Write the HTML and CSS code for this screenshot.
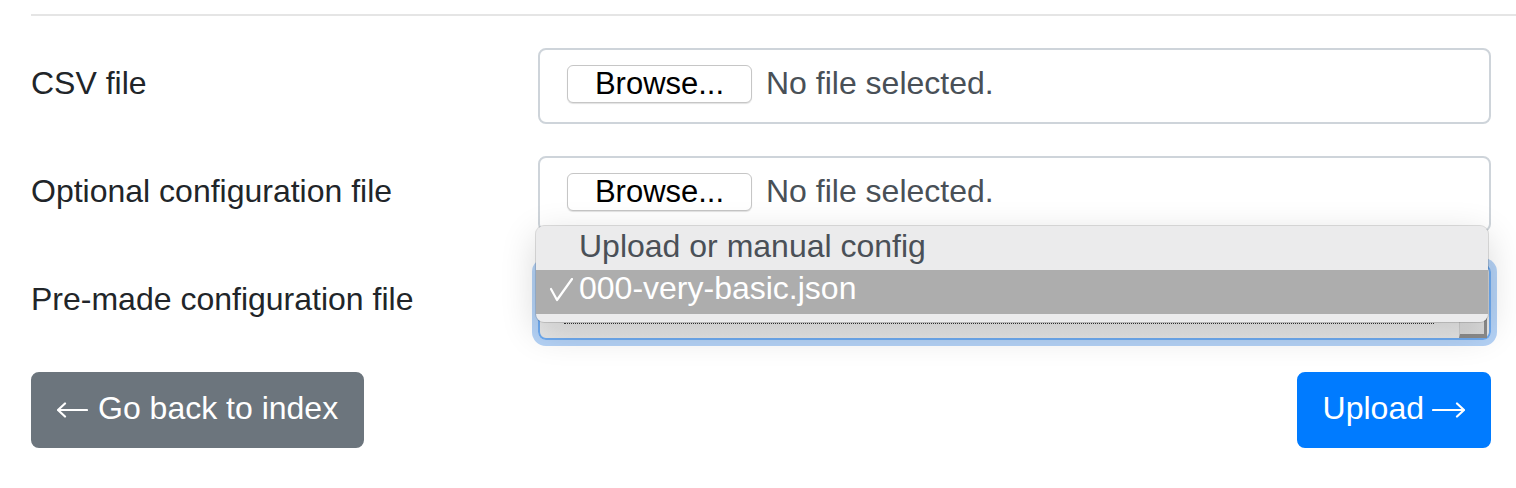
FILE: index.html
```html
<!DOCTYPE html>
<html lang="en">
<head>
<meta charset="utf-8">
<title>Upload</title>
<link rel="stylesheet" href="styles.css">
</head>
<body>
<main class="page">
  <hr class="divider">
  <form class="upload-form">
    <div class="field-row">
      <label class="field-label">CSV file</label>
      <div class="file-box">
        <span class="browse-btn">Browse...</span>
        <span class="file-status">No file selected.</span>
      </div>
    </div>
    <div class="field-row">
      <label class="field-label">Optional configuration file</label>
      <div class="file-box">
        <span class="browse-btn">Browse...</span>
        <span class="file-status">No file selected.</span>
      </div>
    </div>
    <div class="field-row">
      <label class="field-label">Pre-made configuration file</label>
      <div class="select-wrap">
        <div class="select-box">
          <span class="select-focus"></span>
          <span class="select-arrow"></span>
        </div>
        <ul class="popup">
          <li class="popup-item"><span class="check"></span><span class="item-text">Upload or manual config</span></li>
          <li class="popup-item selected"><span class="check"><svg class="check-icon" width="24" height="24" viewBox="0 0 24 24"><polyline points="2,11 8,22 23,1" fill="none" stroke="#fff" stroke-width="2.2" stroke-linecap="round" stroke-linejoin="round"/></svg></span><span class="item-text">000-very-basic.json</span></li>
        </ul>
      </div>
    </div>
    <div class="actions">
      <a class="btn btn-secondary"><svg class="arrow" width="31" height="16" viewBox="0 0 31 16"><path d="M1 8H30M1 8L8 1.5M1 8L8 14.5" fill="none" stroke="#fff" stroke-width="2.2" stroke-linecap="round" stroke-linejoin="round"/></svg>Go back to index</a>
      <button type="button" class="btn btn-primary">Upload<svg class="arrow arrow-right" width="33" height="16" viewBox="0 0 33 16"><path d="M1 8H32M32 8L25 1.5M32 8L25 14.5" fill="none" stroke="#fff" stroke-width="2.2" stroke-linecap="round" stroke-linejoin="round"/></svg></button>
    </div>
  </form>
</main>
</body>
</html>
```
FILE: styles.css
```css
html, body {
  margin: 0;
  padding: 0;
  background: #fff;
}
body {
  font-family: "Liberation Sans", Arial, Helvetica, sans-serif;
  color: #212529;
}
.page {
  width: 1460px;
  padding: 14px 0 0 31px;
}
.divider {
  border: 0;
  height: 2px;
  background: #e5e5e5;
  margin: 0 -25px 32px 0;
}
.field-row {
  display: grid;
  grid-template-columns: 507px 953px;
  margin-bottom: 32px;
}
.field-label {
  font-size: 32px;
  line-height: 48px;
  padding: 11px 0 17px;
}
.file-box {
  box-sizing: border-box;
  height: 76px;
  border: 2px solid #ced4da;
  border-radius: 8px;
  display: flex;
  align-items: center;
  gap: 14px;
  padding: 0 0 4px 27px;
}
.browse-btn {
  box-sizing: border-box;
  width: 185px;
  height: 38px;
  padding-bottom: 1px;
  border: 1px solid #c6c6c6;
  border-radius: 6px;
  background: #fff;
  box-shadow: 0 1px 1px rgba(0, 0, 0, 0.12);
  display: flex;
  align-items: center;
  justify-content: center;
  font-size: 31px;
  color: #000;
}
.file-status {
  font-size: 32px;
  color: #495057;
  padding-bottom: 2px;
}
.select-wrap {
  position: relative;
  height: 76px;
}
.select-box {
  position: relative;
  box-sizing: border-box;
  height: 76px;
  border: 2px solid #6eaaf0;
  border-radius: 8px;
  box-shadow: 0 0 0 6px #b4d2f6;
  background: linear-gradient(#f6f6f6, #e6e6e6);
}
.select-focus {
  position: absolute;
  left: 24px;
  width: 870px;
  top: 57px;
  border-top: 1px dotted #333;
}
.select-arrow {
  position: absolute;
  right: 2px;
  bottom: 0;
  width: 24px;
  height: 40px;
  background: linear-gradient(#ececec, #dadada);
  border-left: 1px solid #cfcfcf;
  border-right: 3px solid #8c8c8c;
  border-bottom: 4px solid #8c8c8c;
}
.popup {
  position: absolute;
  left: -2px;
  right: 3px;
  top: -38px;
  margin: 0;
  padding: 0 0 8px;
  list-style: none;
  background: #ebebec;
  border-radius: 8px;
  box-shadow: 0 0 0 1px rgba(0, 0, 0, 0.13), 0 10px 36px rgba(0, 0, 0, 0.16);
}
.popup-item {
  display: flex;
  align-items: center;
  height: 44px;
  font-size: 32px;
  color: #4a5057;
}
.item-text {
  padding-bottom: 4px;
}
.popup-item.selected {
  background: #adadad;
  color: #fff;
}
.popup-item.selected .item-text {
  padding-bottom: 8px;
}
.check {
  width: 43px;
  display: flex;
  justify-content: flex-end;
  padding-right: 6px;
  box-sizing: border-box;
}
.check-icon {
  display: block;
  margin-top: -4px;
}
.actions {
  display: flex;
  justify-content: space-between;
}
.btn {
  display: flex;
  align-items: center;
  font-family: inherit;
  font-size: 32px;
  line-height: 48px;
  padding: 10px 24px 14px;
  border: 2px solid transparent;
  border-radius: 8px;
  color: #fff;
  cursor: pointer;
}
.arrow {
  display: block;
  margin: 4px 10px 0 0;
}
.arrow-right {
  margin: 4px 0 0 8px;
}
.btn-secondary {
  background: #6c757d;
  border-color: #6c757d;
}
.btn-primary {
  background: #007bff;
  border-color: #007bff;
}
```
